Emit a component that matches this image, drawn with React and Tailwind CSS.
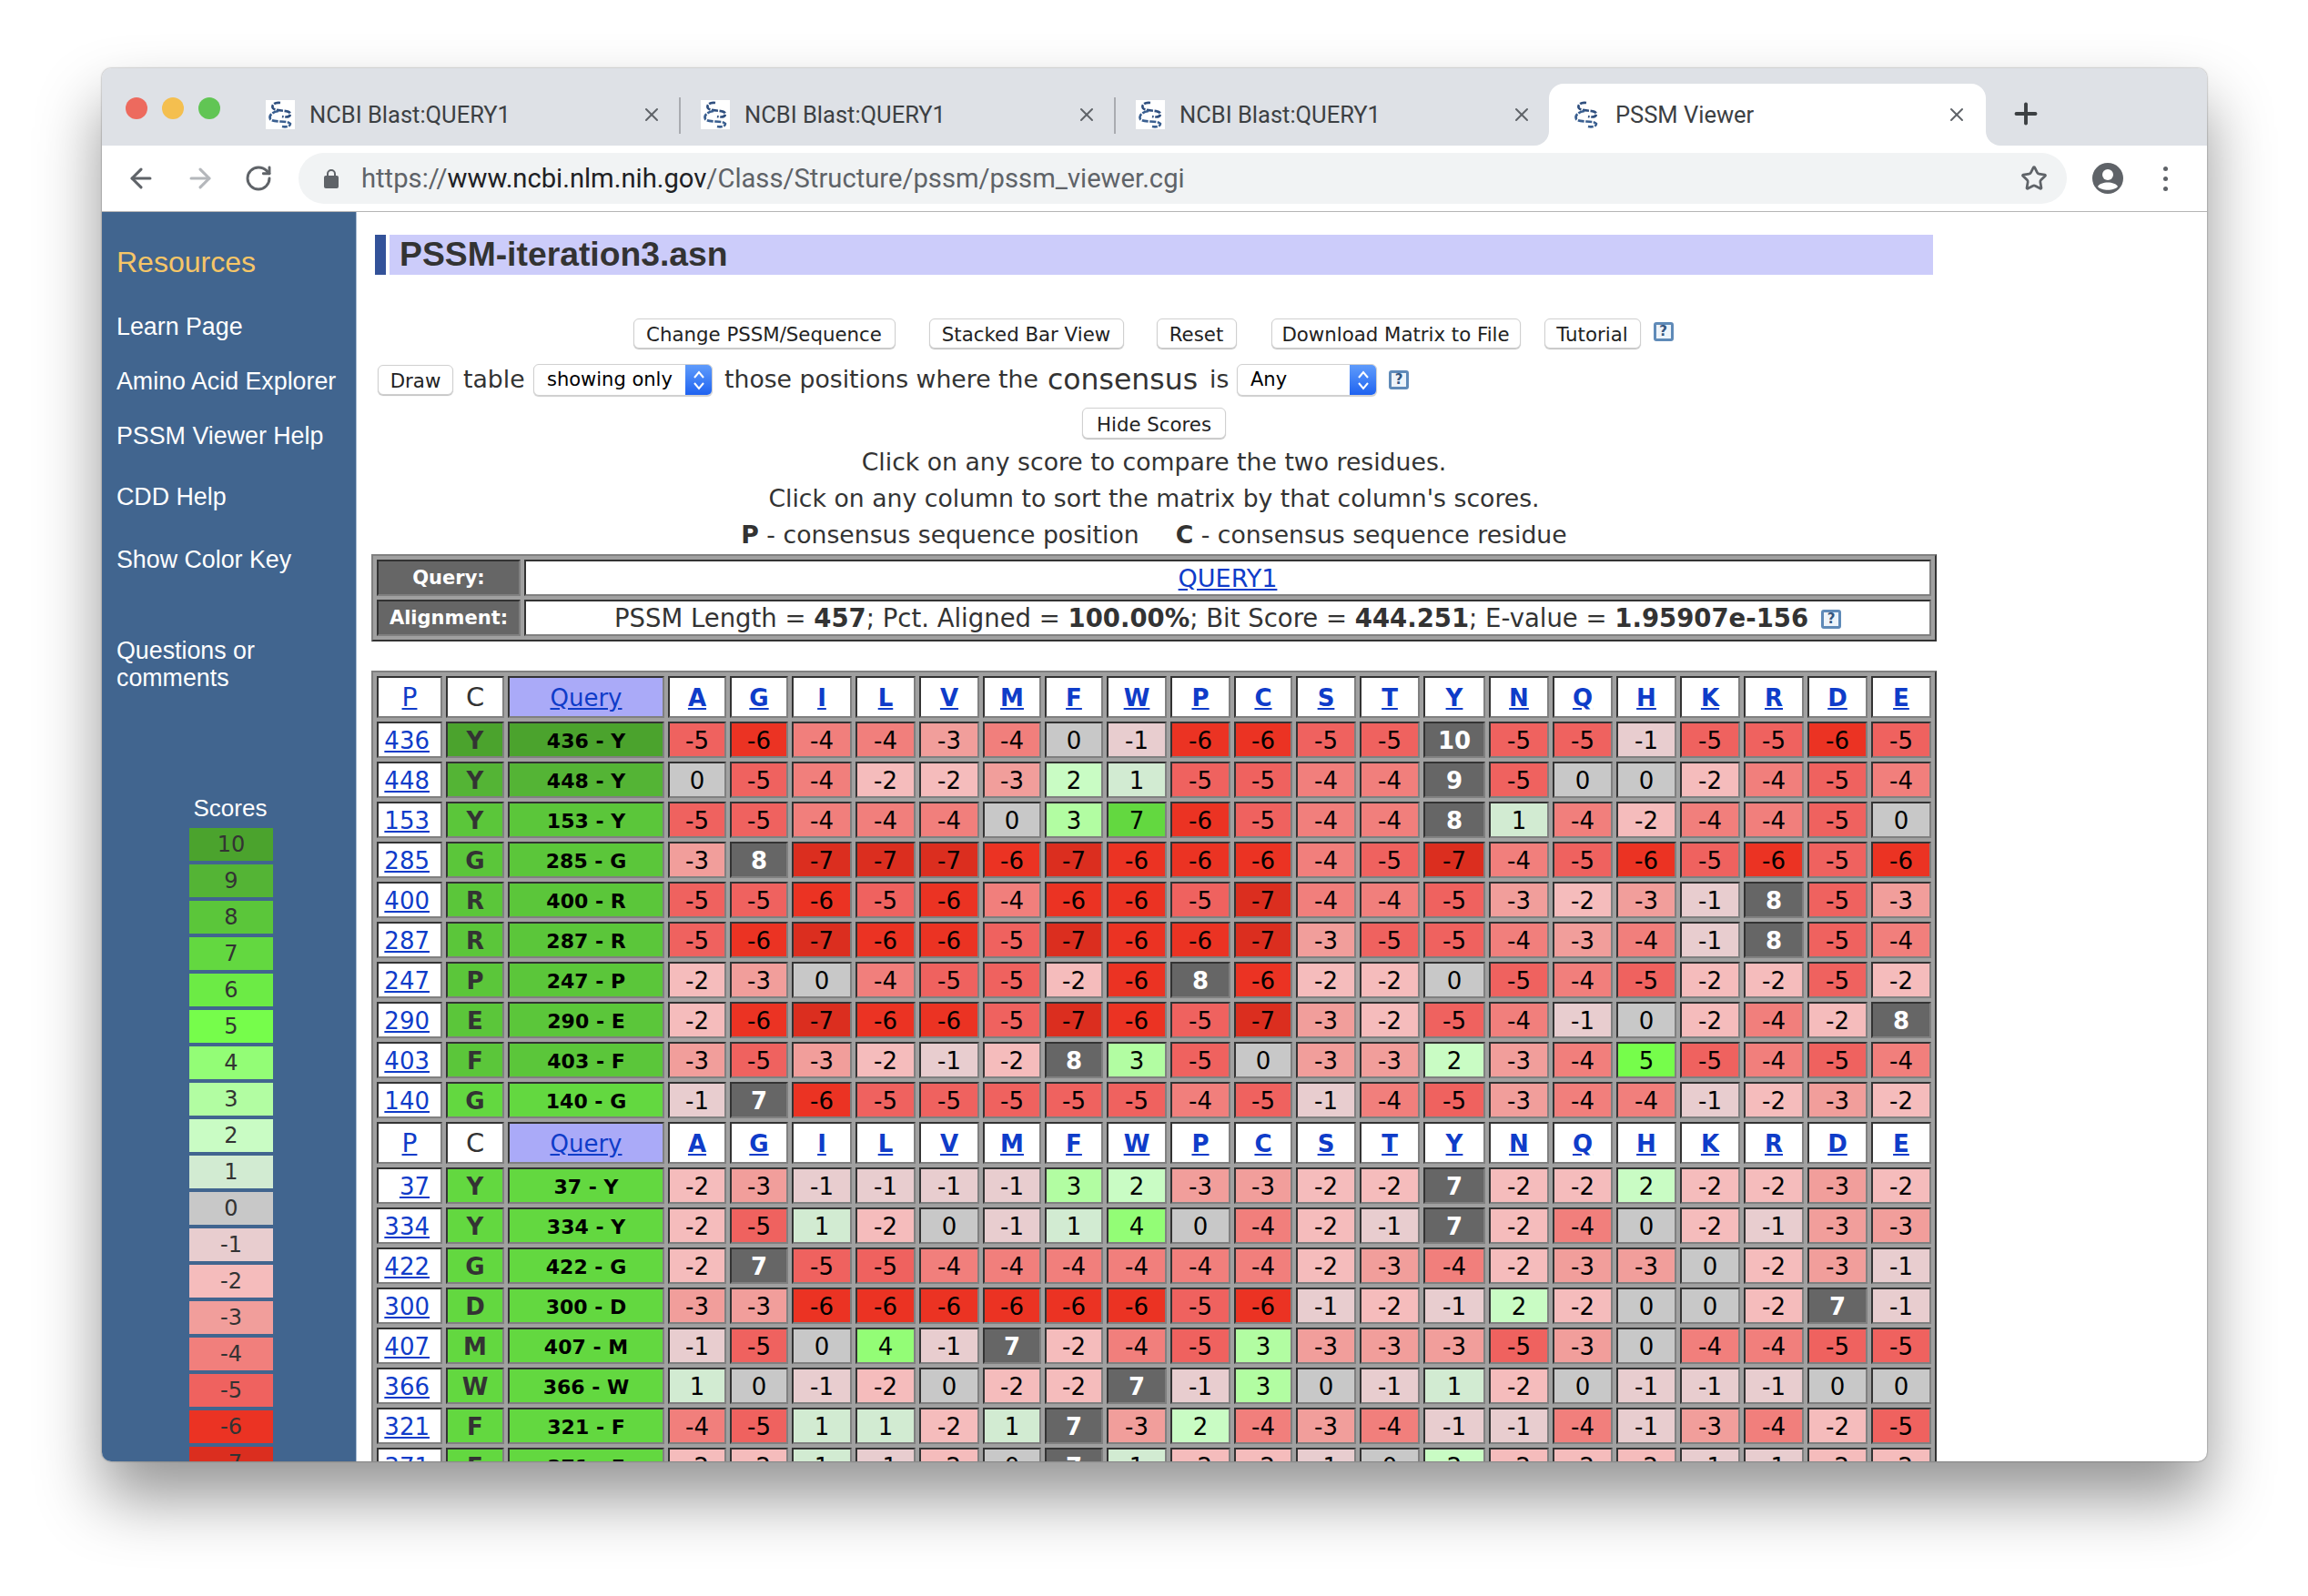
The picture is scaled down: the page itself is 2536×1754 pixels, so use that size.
import React from "react";
import { ArrowLeft, ArrowRight, RotateCw, X, Plus, Star } from "lucide-react";

const COLS = ["A","G","I","L","V","M","F","W","P","C","S","T","Y","N","Q","H","K","R","D","E"];
const BG = {
  10:"bg-[#4ba32d]",9:"bg-[#54b435]",8:"bg-[#5bc63a]",7:"bg-[#63d840]",6:"bg-[#6ceb45]",5:"bg-[#76fd4b]",4:"bg-[#93fd76]",3:"bg-[#b2fda2]",2:"bg-[#c9fcc4]",1:"bg-[#d2ebd2]",0:"bg-[#c8c8c8]",
  "-1":"bg-[#e8cdcf]","-2":"bg-[#f5bcbc]","-3":"bg-[#f19e9b]","-4":"bg-[#f17f7c]","-5":"bg-[#ef625f]","-6":"bg-[#eb3323]","-7":"bg-[#db2e1f]",
};
const ROWS1 = [
  [436,"Y",10,"-5 -6 -4 -4 -3 -4 0 -1 -6 -6 -5 -5 10 -5 -5 -1 -5 -5 -6 -5"],
  [448,"Y",9,"0 -5 -4 -2 -2 -3 2 1 -5 -5 -4 -4 9 -5 0 0 -2 -4 -5 -4"],
  [153,"Y",8,"-5 -5 -4 -4 -4 0 3 7 -6 -5 -4 -4 8 1 -4 -2 -4 -4 -5 0"],
  [285,"G",8,"-3 8 -7 -7 -7 -6 -7 -6 -6 -6 -4 -5 -7 -4 -5 -6 -5 -6 -5 -6"],
  [400,"R",8,"-5 -5 -6 -5 -6 -4 -6 -6 -5 -7 -4 -4 -5 -3 -2 -3 -1 8 -5 -3"],
  [287,"R",8,"-5 -6 -7 -6 -6 -5 -7 -6 -6 -7 -3 -5 -5 -4 -3 -4 -1 8 -5 -4"],
  [247,"P",8,"-2 -3 0 -4 -5 -5 -2 -6 8 -6 -2 -2 0 -5 -4 -5 -2 -2 -5 -2"],
  [290,"E",8,"-2 -6 -7 -6 -6 -5 -7 -6 -5 -7 -3 -2 -5 -4 -1 0 -2 -4 -2 8"],
  [403,"F",8,"-3 -5 -3 -2 -1 -2 8 3 -5 0 -3 -3 2 -3 -4 5 -5 -4 -5 -4"],
  [140,"G",7,"-1 7 -6 -5 -5 -5 -5 -5 -4 -5 -1 -4 -5 -3 -4 -4 -1 -2 -3 -2"],
];
const ROWS2 = [
  [37,"Y",7,"-2 -3 -1 -1 -1 -1 3 2 -3 -3 -2 -2 7 -2 -2 2 -2 -2 -3 -2"],
  [334,"Y",7,"-2 -5 1 -2 0 -1 1 4 0 -4 -2 -1 7 -2 -4 0 -2 -1 -3 -3"],
  [422,"G",7,"-2 7 -5 -5 -4 -4 -4 -4 -4 -4 -2 -3 -4 -2 -3 -3 0 -2 -3 -1"],
  [300,"D",7,"-3 -3 -6 -6 -6 -6 -6 -6 -5 -6 -1 -2 -1 2 -2 0 0 -2 7 -1"],
  [407,"M",7,"-1 -5 0 4 -1 7 -2 -4 -5 3 -3 -3 -3 -5 -3 0 -4 -4 -5 -5"],
  [366,"W",7,"1 0 -1 -2 0 -2 -2 7 -1 3 0 -1 1 -2 0 -1 -1 -1 0 0"],
  [321,"F",7,"-4 -5 1 1 -2 1 7 -3 2 -4 -3 -4 -1 -1 -4 -1 -3 -4 -2 -5"],
  [371,"F",7,"-2 -2 1 -1 -2 0 7 1 -2 -2 -1 0 2 -2 -2 -2 -1 -1 -2 -2"],
];
const LEGEND = [10,9,8,7,6,5,4,3,2,1,0,-1,-2,-3,-4,-5,-6,-7];
const CELL = "flex items-center justify-center pt-[2px] border-2 border-t-[#333333] border-l-[#333333] border-r-[#808080] border-b-[#808080]";
const LINK = "text-[#0f3cc9] underline";

function Favicon({ white }) {
  return (
    <svg width="32" height="32" viewBox="0 0 32 32" className={white ? "shrink-0 bg-white" : "shrink-0"}>
      <path d="M16 3 C9 2 6 6 8 9 C11 13 26 10 27 15 C27 19 22 19 18 18" fill="none" stroke="#2f4f7f" strokeWidth="2.6" strokeDasharray="7 1.5" />
      <path d="M14 12 C7 13 3 17 5 21 C8 25 24 22 27 26 C27 29 22 30 18 29" fill="none" stroke="#3a5f90" strokeWidth="2.6" strokeDasharray="7 1.5" />
    </svg>
  );
}

function Tab({ title, active, sep }) {
  return (
    <div className={active ? "relative flex h-[68px] w-[480px] items-center rounded-t-[16px] bg-white pl-[25px]" : "relative flex h-[68px] w-[478px] items-center pl-[24px]"}>
      <Favicon white={!active} />
      <span className="ml-[16px] font-['Roboto',sans-serif] text-[25.5px] text-[#3c4043]">{title}</span>
      <X className="absolute left-[436px] top-[22px] text-[#5f6368]" size={24} strokeWidth={2} />
      {sep && <div className="absolute right-[-2px] top-[15px] h-[40px] w-[2px] bg-[#a9abb0]" />}
      {active && (
        <div className="absolute bottom-0 left-full h-[18px] w-[18px] bg-white">
          <div className="h-full w-full rounded-bl-[16px] bg-[#dee1e6]" />
        </div>
      )}
      {active && (
        <div className="absolute bottom-0 right-full h-[18px] w-[18px] bg-white">
          <div className="h-full w-full rounded-br-[16px] bg-[#dee1e6]" />
        </div>
      )}
    </div>
  );
}

function Btn({ w, children }) {
  return (
    <div className={`flex items-center justify-center rounded-[6px] border border-[#d0d0d0] bg-white pt-[3px] text-[21.3px] text-[#222222] shadow-[0_1px_1px_rgba(0,0,0,0.25)] ${w}`}>
      {children}
    </div>
  );
}

function Help() {
  return (
    <span className="flex h-[21px] w-[22px] shrink-0 items-center justify-center rounded-[3px] border-[3px] border-[#5f8ab8] bg-[#eef4fa] text-[15px] font-bold leading-none text-[#34567f]">?</span>
  );
}

function Select({ w, text }) {
  return (
    <div className={`flex h-[35px] shrink-0 items-stretch overflow-hidden rounded-[6px] border border-[#d0d0d0] bg-white shadow-[0_1px_1px_rgba(0,0,0,0.2)] ${w}`}>
      <div className="flex flex-1 items-center pl-[14px] pt-px text-[21px] text-black">{text}</div>
      <div className="flex w-[29px] items-center justify-center bg-gradient-to-b from-[#5f9bfb] to-[#1f62f0]">
        <svg width="16" height="26" viewBox="0 0 16 26" fill="none" stroke="white" strokeWidth="2">
          <path d="M3 10 L8 4 L13 10" />
          <path d="M3 16 L8 22 L13 16" />
        </svg>
      </div>
    </div>
  );
}

function Header() {
  return (
    <>
      <div className={`${CELL} h-[46px] bg-white text-[28px]`}><span className={LINK}>P</span></div>
      <div className={`${CELL} h-[46px] bg-white text-[29px] text-[#333333]`}>C</div>
      <div className={`${CELL} h-[46px] bg-[#aaaaf8] text-[26px]`}><span className={LINK}>Query</span></div>
      {COLS.map((c) => (
        <div key={c} className={`${CELL} h-[46px] bg-white text-[26px] font-bold`}><span className={LINK}>{c}</span></div>
      ))}
    </>
  );
}

function Row({ row }) {
  const [pos, res, level, vals] = row;
  return (
    <>
      <div className={`${CELL} h-[40px] !justify-end bg-white pr-[12px] text-[26px]`}><span className={LINK}>{pos}</span></div>
      <div className={`${CELL} h-[40px] ${BG[level]} text-[26px] font-bold text-[#333333]`}>{res}</div>
      <div className={`${CELL} h-[40px] ${BG[level]} whitespace-pre text-[22px] font-bold text-black`}>{`${pos} - ${res}`}</div>
      {vals.split(" ").map((v, i) =>
        COLS[i] === res ? (
          <div key={i} className={`${CELL} h-[40px] bg-[#666666] text-[26px] font-bold text-white`}>{v}</div>
        ) : (
          <div key={i} className={`${CELL} h-[40px] ${BG[v]} text-[26px] text-black`}>{v}</div>
        )
      )}
    </>
  );
}

export default function App() {
  return (
    <div className="h-[1754px] w-[2536px] overflow-hidden bg-white pl-[112px] pt-[75px]">
      <div className="flex h-[1531px] w-[2313px] flex-col overflow-hidden rounded-[10px] bg-white shadow-[0_40px_70px_rgba(0,0,0,0.42),0_0_2px_rgba(0,0,0,0.5)]">
        {/* Tab strip */}
        <div className="flex h-[85px] shrink-0 bg-[#dee1e6]">
          <div className="mt-[32px] flex h-[24px] w-[156px] shrink-0 gap-[16px] pl-[26px]">
            <div className="h-[24px] w-[24px] rounded-full bg-[#ed6a5e]" />
            <div className="h-[24px] w-[24px] rounded-full bg-[#f4bf4f]" />
            <div className="h-[24px] w-[24px] rounded-full bg-[#61c554]" />
          </div>
          <div className="mt-[17px] flex h-[68px]">
            <Tab title="NCBI Blast:QUERY1" sep />
            <Tab title="NCBI Blast:QUERY1" sep />
            <Tab title="NCBI Blast:QUERY1" />
            <Tab title="PSSM Viewer" active />
          </div>
          <Plus className="ml-[26px] mt-[32px] text-[#3c4043]" size={36} strokeWidth={2.6} />
        </div>
        {/* Toolbar */}
        <div className="flex h-[73px] shrink-0 items-center border-b border-[#b5b5b5] bg-white pl-[11px]">
          <div className="flex w-[64px] justify-center"><ArrowLeft className="text-[#5f6368]" size={34} strokeWidth={2.2} /></div>
          <div className="flex w-[65px] justify-center"><ArrowRight className="text-[#b4b7bb]" size={34} strokeWidth={2.2} /></div>
          <div className="flex w-[64px] justify-center"><RotateCw className="text-[#5f6368]" size={32} strokeWidth={2.2} /></div>
          <div className="ml-[12px] flex h-[56px] w-[1943px] items-center rounded-full bg-[#f1f3f4] pl-[28px] pr-[21px]">
            <svg width="16" height="22" viewBox="0 0 16 22" className="shrink-0">
              <rect x="0" y="8" width="16" height="14" rx="2" fill="#5f6368" />
              <path d="M4 9 V6 a4 4 0 0 1 8 0 V9" fill="none" stroke="#5f6368" strokeWidth="2" />
            </svg>
            <div className="ml-[25px] flex-1 pt-px font-['Roboto',sans-serif] text-[29.2px] text-[#5f6368]">
              https://<span className="text-[#202124]">www.ncbi.nlm.nih.gov</span>/Class/Structure/pssm/pssm_viewer.cgi
            </div>
            <Star className="text-[#5f6368]" size={30} strokeWidth={2.2} />
          </div>
          <svg width="34" height="34" viewBox="0 0 34 34" className="ml-[28px] shrink-0">
            <circle cx="17" cy="17" r="17" fill="#5f6368" />
            <circle cx="17" cy="13" r="6" fill="white" />
            <path d="M6 26 C9 20 25 20 28 26 C24 31 10 31 6 26Z" fill="white" />
          </svg>
          <div className="ml-[44px] flex flex-col gap-[6px]">
            <div className="h-[5px] w-[5px] rounded-full bg-[#5f6368]" />
            <div className="h-[5px] w-[5px] rounded-full bg-[#5f6368]" />
            <div className="h-[5px] w-[5px] rounded-full bg-[#5f6368]" />
          </div>
        </div>
        {/* Page */}
        <div className="flex min-h-0 flex-1 overflow-hidden">
          <aside className="flex w-[280px] shrink-0 flex-col border-r border-[#a9bdd3] bg-[#41658f] pl-[16px] pt-[37px] font-['Liberation_Sans',sans-serif] text-[26.8px] leading-[30px] text-white">
            <div className="text-[32px] leading-[36px] text-[#f6c667]">Resources</div>
            <div className="mt-[38px]">Learn Page</div>
            <div className="mt-[30px]">Amino Acid Explorer</div>
            <div className="mt-[30px]">PSSM Viewer Help</div>
            <div className="mt-[37px]">CDD Help</div>
            <div className="mt-[39px]">Show Color Key</div>
            <div className="mt-[70px]">Questions or<br />comments</div>
            <div className="ml-[79px] mt-[113px] w-[92px] text-center text-[26px]">Scores</div>
            <div className="ml-[80px] mt-[7px] flex w-[92px] flex-col gap-[4px]">
              {LEGEND.map((s) => (
                <div key={s} className={`flex h-[36px] shrink-0 items-center justify-center font-['DejaVu_Sans',sans-serif] text-[24px] text-[#333333] ${BG[s]}`}>{s}</div>
              ))}
            </div>
          </aside>
          <main className="min-w-0 flex-1 pt-[25px] font-['DejaVu_Sans',sans-serif] text-[26.7px] text-[#333333]">
            <div className="ml-[20px] flex h-[44px] w-[1712px] gap-[4px]">
              <div className="w-[12px] bg-[#335299]" />
              <div className="flex flex-1 items-center bg-[#ccccfa] pl-[11px] font-['Liberation_Sans',sans-serif] text-[37.3px] font-bold text-[#333333]">PSSM-iteration3.asn</div>
            </div>
            <div className="ml-[16px] w-[1720px]">
              <div className="mt-[48px] flex h-[33px] items-stretch justify-center pr-[2px]">
                <Btn w="w-[288px]">Change PSSM/Sequence</Btn>
                <div className="w-[37px]" />
                <Btn w="w-[214px]">Stacked Bar View</Btn>
                <div className="w-[36px]" />
                <Btn w="w-[88px]">Reset</Btn>
                <div className="w-[38px]" />
                <Btn w="w-[274px]">Download Matrix to File</Btn>
                <div className="w-[26px]" />
                <Btn w="w-[106px]">Tutorial</Btn>
                <div className="ml-[14px] mt-[4px]"><Help /></div>
              </div>
              <div className="mt-[17px] flex h-[35px] items-center whitespace-nowrap pl-[7px]">
                <Btn w="h-[33px] w-[83px] shrink-0">Draw</Btn>
                <span className="ml-[11px] w-[77px] shrink-0">table</span>
                <Select w="w-[197px]" text="showing only" />
                <span className="ml-[13px] w-[344px] shrink-0">those positions where the</span>
                <span className="ml-[11px] w-[165px] shrink-0 text-[31.5px]">consensus</span>
                <span className="ml-[13px] w-[30px] shrink-0">is</span>
                <Select w="w-[154px]" text="Any" />
                <div className="ml-[13px]"><Help /></div>
              </div>
              <div className="mt-[13px] flex justify-center">
                <Btn w="h-[34px] w-[158px]">Hide Scores</Btn>
              </div>
              <div className="mt-[6px] text-center leading-[40px]">
                <div>Click on any score to compare the two residues.</div>
                <div>Click on any column to sort the matrix by that column's scores.</div>
                <div className="whitespace-pre"><b>P</b> - consensus sequence position<span className="inline-block w-[40px]" /><b>C</b> - consensus sequence residue</div>
              </div>
              <div className="mt-[1px] grid grid-cols-[158px_1fr] gap-[4px] border-2 border-b-[#333333] border-l-[#808080] border-r-[#333333] border-t-[#808080] bg-[#a0a0a0] p-[4px]">
                <div className={`${CELL} h-[40px] bg-[#666666] text-[21px] font-bold text-white`}>Query:</div>
                <div className={`${CELL} h-[40px] bg-white text-[27px]`}><span className={LINK}>QUERY1</span></div>
                <div className={`${CELL} h-[40px] bg-[#666666] text-[21px] font-bold text-white`}>Alignment:</div>
                <div className={`${CELL} h-[40px] gap-[14px] bg-white text-[27.5px]`}>
                  <span>PSSM Length = <b>457</b>; Pct. Aligned = <b>100.00%</b>; Bit Score = <b>444.251</b>; E-value = <b>1.95907e-156</b></span>
                  <Help />
                </div>
              </div>
              <div className="mt-[32px] grid grid-cols-[72px_64px_172px_64px_64px_66px_66px_66px_64px_64px_66px_66px_64px_66px_66px_68px_66px_66px_66px_66px_66px_66px_66px] gap-[4px] border-2 border-b-[#333333] border-l-[#808080] border-r-[#333333] border-t-[#808080] bg-[#a0a0a0] p-[4px]">
                <Header />
                {ROWS1.map((r) => <Row key={r[0]} row={r} />)}
                <Header />
                {ROWS2.map((r) => <Row key={r[0]} row={r} />)}
              </div>
            </div>
          </main>
        </div>
      </div>
    </div>
  );
}
